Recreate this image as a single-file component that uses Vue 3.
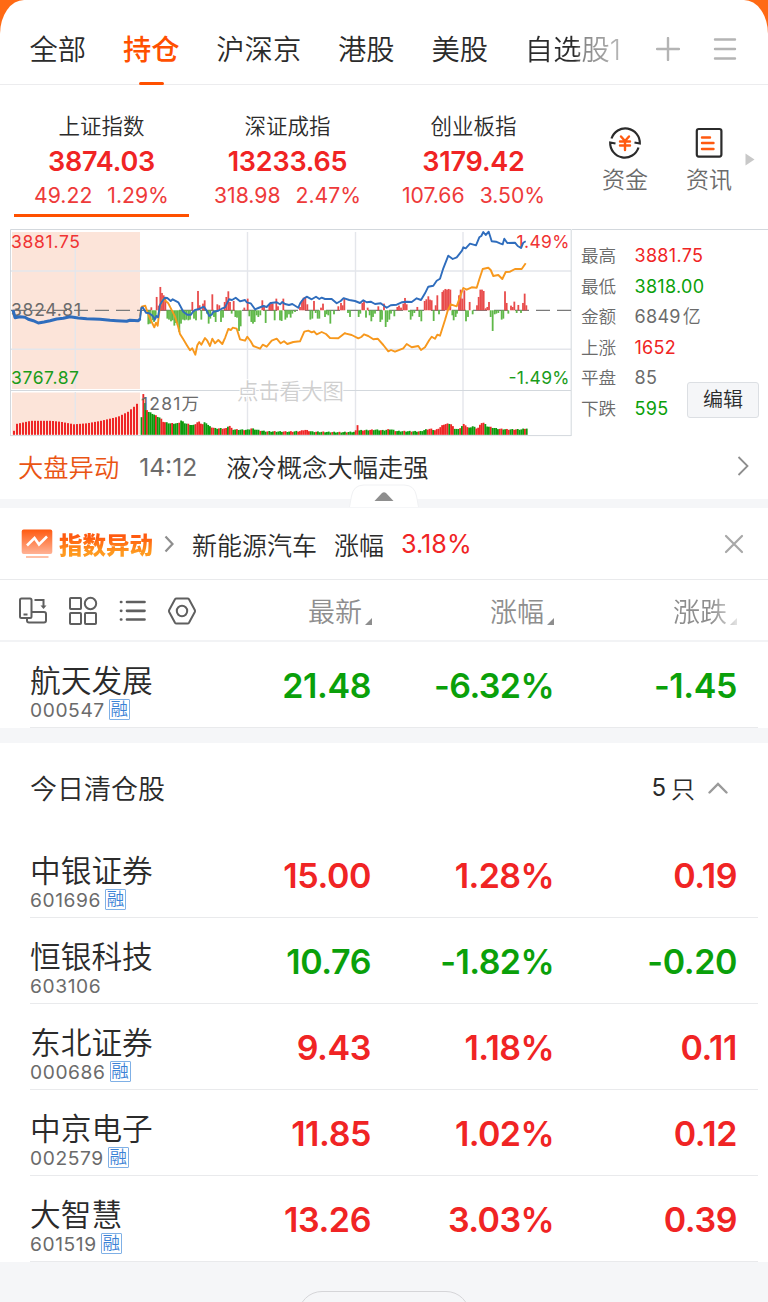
<template>
  <div class="page">
    <div class="sheet">
      <!-- Group Tabs -->
      <nav class="tabs">
        <div
          v-for="tab in tabs"
          :key="tab"
          :class="['tab', { active: tab === activeTab, fading: tab === '自选股1' }]"
          @click="activeTab = tab"
        >
          {{ tab }}
        </div>
        <svg class="tab-plus" width="24" height="24" viewBox="0 0 24 24">
          <path d="M1 12H23M12 1V23" />
        </svg>
        <svg class="tab-menu" width="24" height="24" viewBox="0 0 24 24">
          <path d="M2 2.5H22M2 12H22M2 21.5H22" />
        </svg>
      </nav>

      <!-- Market Indices -->
      <section class="indices">
        <div
          v-for="(item, i) in indices"
          :key="item.name"
          :class="['index-card', { selected: i === 0 }]"
        >
          <div class="index-name">{{ item.name }}</div>
          <div class="index-value">{{ item.value }}</div>
          <div class="index-change">
            <span>{{ item.change }}</span>
            <span>{{ item.percent }}</span>
          </div>
        </div>
        <div class="shortcut fund">
          <svg width="34" height="34" viewBox="0 0 34 34">
            <path class="dark" d="M3.5 12.5A14.5 14.5 0 0 1 31.8 17.5L26.5 16.5M30.5 21.5A14.5 14.5 0 0 1 2.2 16.5L7.5 17.5" />
            <path class="accent" d="M13 10.5L17 15L21 10.5M12 15.5H22M12 19.5H22M17 15V24" />
          </svg>
          <span>资金</span>
        </div>
        <div class="shortcut news">
          <svg width="34" height="34" viewBox="0 0 34 34">
            <rect class="dark" x="4.8" y="3" width="24.6" height="27.6" rx="2" />
            <path class="accent" d="M10 11.5H18M10 17H21.5M10 23H21.5" />
          </svg>
          <span>资讯</span>
        </div>
        <svg class="more-arrow" width="10" height="13" viewBox="0 0 10 13">
          <path d="M0.5 0.5L9.5 6.5L0.5 12.5Z" />
        </svg>
      </section>

      <!-- Intraday Chart -->
      <section class="market">
        <svg class="chart" width="572" height="208" viewBox="0 229 572 208">
          <rect x="12" y="232" width="128" height="157" class="preopen" />
          <rect x="12" y="392.5" width="128" height="42" class="preopen" />
          <path class="grid" d="M11 271H571M11 349.3H571M75.3 232V389M75.3 392V435M247.5 232V435M355.5 232V435M463 232V435" />
          <path class="frame" d="M10.5 436V229.5H571.2V436M10.5 390.5H571M10.5 435.6H571" />
          <path class="dash" d="M11 310.3H571" />
          <rect
            v-for="(bar, i) in momentum"
            :key="'m' + i"
            :x="bar.x"
            :y="bar.y"
            width="1.8"
            :height="bar.h"
            :class="bar.up ? 'bar-up' : 'bar-down'"
          />
          <rect
            v-for="(bar, i) in volume"
            :key="'v' + i"
            :x="bar.x"
            :y="434.8 - bar.h"
            :width="bar.w"
            :height="bar.h"
            :class="bar.up ? 'vol-up' : 'vol-down'"
          />
          <text x="237" y="398.5" class="watermark">点击看大图</text>
          <text x="11" y="248" class="label red" textLength="69">3881.75</text>
          <text x="11" y="316" class="label gray" textLength="70">3824.81</text>
          <text x="11" y="384" class="label green" textLength="68">3767.87</text>
          <text x="569.5" y="248" class="label red end" textLength="53">1.49%</text>
          <text x="569.5" y="384" class="label green end" textLength="61">-1.49%</text>
          <text x="141" y="410" class="label gray" textLength="58">1281万</text>
          <polyline class="line orange" :points="averageLine" />
          <polyline class="line blue thick" :points="preopenLine" />
          <polyline class="line blue" :points="priceLine" />
        </svg>
        <div class="stats">
          <div v-for="s in stats" :key="s.label" class="stat">
            <span class="stat-label">{{ s.label }}</span>
            <span :class="['stat-value', s.tone]">{{ s.value }}<em v-if="s.unit">{{ s.unit }}</em></span>
          </div>
          <button class="edit">编辑</button>
        </div>
      </section>

      <!-- Market Alert -->
      <section class="alert">
        <span class="alert-tag">大盘异动</span>
        <span class="alert-time">14:12</span>
        <span class="alert-text">液冷概念大幅走强</span>
        <svg class="alert-arrow" width="12" height="20" viewBox="0 0 12 20">
          <path d="M1.5 1L10.5 10L1.5 19" />
        </svg>
      </section>
      <div class="strip">
        <svg class="collapse" width="70" height="24" viewBox="0 0 70 24">
          <path class="collapse-bg" d="M0.5 23L2.5 12Q4.5 1 15 1H55Q65.5 1 67.5 12L69.5 23" />
          <path class="collapse-arrow" d="M25.5 17L33 9Q35 7.5 37 9L44.5 17Z" />
        </svg>
      </div>

      <!-- Index Alert -->
      <section class="notice">
        <svg class="notice-icon" width="32" height="30" viewBox="0 0 32 30">
          <defs>
            <linearGradient id="noticeFill" x1="0" y1="0" x2="0" y2="1">
              <stop offset="0" stop-color="#ff5a10" />
              <stop offset="1" stop-color="#ffb295" />
            </linearGradient>
          </defs>
          <rect x="0.7" y="0.5" width="30.6" height="24.5" rx="2" fill="url(#noticeFill)" />
          <path d="M6 16.5L13.5 9L18 15.5L26 7.5" class="notice-line" />
          <path d="M5 28H27.5" class="notice-base" />
        </svg>
        <span class="notice-title">指数异动</span>
        <svg class="notice-arrow" width="10" height="18" viewBox="0 0 10 18">
          <path d="M1.5 1.5L8.5 9L1.5 16.5" />
        </svg>
        <span class="notice-name">新能源汽车</span>
        <span class="notice-label">涨幅</span>
        <span class="notice-value">3.18%</span>
        <svg class="notice-close" width="20" height="20" viewBox="0 0 20 20">
          <path d="M2 2L18 18M18 2L2 18" />
        </svg>
      </section>

      <!-- Table Header -->
      <section class="row-grid table-head">
        <div class="tools">
          <svg width="30" height="30" viewBox="0 0 30 30">
            <rect x="2" y="2.5" width="11.5" height="19.5" rx="1.5" />
            <path d="M5.5 18.5H9.5M16.5 4H25.5V10.5M9 22V24.5Q9 26.5 11 26.5H26Q28 26.5 28 24.5V18Q28 16 26 16H13.5" />
            <path class="solid" d="M22.5 9.5H28.5L25.5 13Z" />
          </svg>
          <svg width="30" height="30" viewBox="0 0 30 30">
            <rect x="2" y="2" width="11" height="11" rx="0.8" />
            <circle cx="22.5" cy="7.5" r="5.7" />
            <rect x="2" y="17" width="11" height="11" rx="0.8" />
            <rect x="17" y="17" width="11" height="11" rx="0.8" />
          </svg>
          <svg width="30" height="30" viewBox="0 0 30 30">
            <path class="list-icon" d="M10 6H27.5M10 14.8H27.5M10 23.5H27.5M4 6H4.3M4 14.8H4.3M4 23.5H4.3" />
          </svg>
          <svg width="30" height="30" viewBox="0 0 30 30">
            <path d="M9.5 2.5H20.5Q21.5 2.5 22 3.3L27.8 14Q28.3 15 27.8 16L22 26.7Q21.5 27.5 20.5 27.5H9.5Q8.5 27.5 8 26.7L2.2 16Q1.7 15 2.2 14L8 3.3Q8.5 2.5 9.5 2.5Z" />
            <circle cx="15" cy="15" r="5.2" />
          </svg>
        </div>
        <div v-for="col in columns" :key="col" :class="['col-head', { faded: col === '涨跌' }]">
          <span>{{ col }}</span>
          <svg width="7" height="7" viewBox="0 0 7 7"><path d="M7 0V7H0Z" /></svg>
        </div>
      </section>

      <!-- Holdings -->
      <section class="list">
        <div v-for="stock in holdings" :key="stock.code" class="row-grid stock">
          <div class="stock-id">
            <div class="stock-name">{{ stock.name }}</div>
            <div class="stock-code">
              <span>{{ stock.code }}</span>
              <i v-if="stock.margin" class="badge">融</i>
            </div>
          </div>
          <div v-for="key in fields" :key="key" :class="['num', key, tone(stock)]">{{ stock[key] }}</div>
        </div>
      </section>
      <div class="divider"></div>

      <!-- Closed Today -->
      <section class="section-head">
        <span>今日清仓股</span>
        <div class="count">
          <span class="count-num">{{ closed.length }}</span>
          <span>只</span>
          <svg width="20" height="12" viewBox="0 0 20 12">
            <path d="M1.5 10.5L10 2L18.5 10.5" />
          </svg>
        </div>
      </section>
      <section class="list">
        <div v-for="stock in closed" :key="stock.code" class="row-grid stock">
          <div class="stock-id">
            <div class="stock-name">{{ stock.name }}</div>
            <div class="stock-code">
              <span>{{ stock.code }}</span>
              <i v-if="stock.margin" class="badge">融</i>
            </div>
          </div>
          <div v-for="key in fields" :key="key" :class="['num', key, tone(stock)]">{{ stock[key] }}</div>
        </div>
      </section>
    </div>
    <footer class="footer">
      <div class="footer-pill"></div>
    </footer>
  </div>
</template>

<script setup>
import { ref } from 'vue';

const tabs = ['全部', '持仓', '沪深京', '港股', '美股', '自选股1'];
const activeTab = ref('持仓');

const indices = [
  { name: '上证指数', value: '3874.03', change: '49.22', percent: '1.29%' },
  { name: '深证成指', value: '13233.65', change: '318.98', percent: '2.47%' },
  { name: '创业板指', value: '3179.42', change: '107.66', percent: '3.50%' }
];

const stats = [
  { label: '最高', value: '3881.75', tone: 'red' },
  { label: '最低', value: '3818.00', tone: 'green' },
  { label: '金额', value: '6849', unit: '亿', tone: 'gray' },
  { label: '上涨', value: '1652', tone: 'red' },
  { label: '平盘', value: '85', tone: 'gray' },
  { label: '下跌', value: '595', tone: 'green' }
];

const columns = ['最新', '涨幅', '涨跌'];
const fields = ['price', 'percent', 'change'];

const holdings = [
  { name: '航天发展', code: '000547', margin: true, price: '21.48', percent: '-6.32%', change: '-1.45' }
];

const closed = [
  { name: '中银证券', code: '601696', margin: true, price: '15.00', percent: '1.28%', change: '0.19' },
  { name: '恒银科技', code: '603106', margin: false, price: '10.76', percent: '-1.82%', change: '-0.20' },
  { name: '东北证券', code: '000686', margin: true, price: '9.43', percent: '1.18%', change: '0.11' },
  { name: '中京电子', code: '002579', margin: true, price: '11.85', percent: '1.02%', change: '0.12' },
  { name: '大智慧', code: '601519', margin: true, price: '13.26', percent: '3.03%', change: '0.39' }
];

function tone(stock) {
  return stock.change.startsWith('-') ? 'green' : 'red';
}

// Series are stored in thirds of a pixel, relative to the start of each session
const MORNING = 130;
const AFTERNOON = 340;

function toPoints(list, originX) {
  return list.map(([x, y]) => `${(originX + x / 3).toFixed(1)},${(220 + y / 3).toFixed(1)}`);
}

const preopenLine = toPoints([
  [39, 270], [45, 293], [60, 290], [75, 292], [85, 298], [100, 302], [115, 309], [132, 306], [150, 302], [170, 297],
  [190, 295], [210, 290], [235, 294], [260, 296], [300, 298], [330, 301], [350, 302], [380, 304], [390, 301],
  [415, 302], [421, 296]
], 0).join(' ');

const priceLine = [
  ...toPoints([
    [30, 298], [34, 264], [38, 262], [48, 278], [57, 280], [65, 285], [70, 290], [74, 300], [79, 288], [84, 292],
    [90, 255], [97, 243], [105, 233], [112, 234], [122, 243], [128, 238], [145, 247], [152, 260], [160, 275],
    [172, 284], [183, 284], [188, 276], [195, 270], [205, 268], [215, 263], [222, 260], [230, 272], [238, 288],
    [245, 284], [250, 275], [265, 272], [275, 266], [285, 262], [291, 250], [297, 238], [306, 240], [317, 233],
    [330, 244], [345, 240], [350, 247], [362, 250], [375, 268], [385, 264], [400, 258], [410, 261], [420, 250],
    [428, 248], [440, 247], [450, 253], [457, 246], [465, 252], [477, 255], [487, 252], [505, 263], [511, 249],
    [520, 237], [530, 230], [545, 238], [558, 230], [568, 237], [575, 233], [585, 237], [605, 237], [620, 250],
    [632, 243], [640, 235]
  ], MORNING),
  ...toPoints([
    [13, 235], [28, 240], [45, 243], [60, 249], [70, 241], [80, 247], [92, 245], [105, 252], [122, 250], [130, 256],
    [140, 263], [152, 256], [170, 254], [185, 247], [200, 245], [215, 246], [230, 235], [243, 240], [255, 220],
    [265, 200], [280, 197], [290, 182], [300, 176], [310, 145], [325, 107], [338, 117], [350, 112], [355, 106],
    [366, 92], [370, 82], [377, 85], [390, 71], [408, 76], [418, 52], [424, 48], [430, 36], [437, 45], [446, 35],
    [455, 64], [468, 65], [480, 70], [488, 73], [493, 56], [502, 69], [525, 68], [533, 78], [543, 84], [550, 68],
    [557, 64]
  ], AFTERNOON)
].join(' ');

const averageLine = [
  ...toPoints([
    [30, 290], [35, 260], [46, 257], [52, 275], [60, 295], [65, 306], [73, 322], [78, 308], [83, 317], [90, 258],
    [100, 237], [115, 250], [126, 272], [135, 290], [143, 315], [150, 342], [160, 358], [170, 375], [180, 391],
    [187, 385], [196, 404], [202, 376], [208, 366], [214, 374], [225, 354], [232, 362], [240, 378], [247, 356],
    [255, 370], [265, 360], [277, 372], [286, 352], [295, 327], [303, 330], [308, 323], [320, 326], [330, 358],
    [345, 362], [352, 350], [362, 364], [370, 378], [390, 386], [398, 374], [410, 380], [425, 362], [440, 356],
    [452, 370], [462, 364], [472, 372], [490, 366], [510, 364], [523, 335], [535, 332], [545, 337], [552, 334],
    [560, 343], [575, 336], [588, 342], [600, 354], [625, 355], [645, 339]
  ], MORNING),
  ...toPoints([
    [15, 340], [35, 345], [55, 355], [64, 351], [72, 343], [85, 348], [100, 358], [113, 356], [130, 375],
    [145, 394], [153, 390], [165, 395], [190, 385], [200, 372], [215, 382], [235, 378], [243, 390], [255, 382],
    [268, 360], [275, 350], [285, 356], [292, 344], [300, 347], [315, 300], [323, 272], [332, 253], [350, 259],
    [360, 230], [370, 204], [380, 209], [395, 202], [410, 203], [418, 178], [428, 147], [445, 143], [452, 150],
    [460, 168], [475, 165], [487, 177], [497, 156], [510, 155], [525, 147], [545, 147], [557, 130]
  ], AFTERNOON)
].join(' ');

function toBars(list, originX) {
  return list.map(([x, v]) => ({
    x: originX + x / 3 - 0.9,
    y: v > 0 ? 310.3 - v / 3 : 310.3,
    h: Math.abs(v) / 3,
    up: v > 0
  }));
}

const momentum = [
  ...toBars([
    [55, -42], [60, -40], [64, 9], [67, -30], [72, -35], [77, -25], [80, 40], [86, 14], [91, 70], [96, 52],
    [101, 45], [106, 36], [112, -25], [117, -28], [123, -33], [128, -30], [133, -46], [138, -38], [143, -45],
    [148, -65], [153, -40], [159, -28], [164, -30], [169, -28], [175, -30], [180, -28], [187, 25], [192, -25],
    [198, -30], [204, 58], [209, 15], [214, -28], [219, 20], [224, 30], [231, -10], [236, -40], [241, -25],
    [247, 48], [252, -20], [257, -35], [262, 18], [268, 15], [273, -35], [279, -22], [284, 25], [289, 40],
    [295, 57], [300, 25], [305, -10], [311, 28], [316, -20], [321, -22], [327, -62], [332, -48], [343, 8],
    [353, 35], [358, -18], [364, -35], [369, -40], [374, -35], [380, -15], [385, -20], [391, -15], [397, 30],
    [402, 15], [407, -38], [418, 18], [423, 25], [428, 20], [434, -30], [439, 35], [444, 12], [450, -30],
    [455, -32], [460, 35], [466, -28], [471, -22], [477, -12], [482, -22], [487, -10], [495, -5], [510, 10],
    [516, 30], [521, 38], [526, 40], [532, 18], [541, -28], [547, -25], [552, 28], [557, -8], [563, -25],
    [568, -25], [573, 8], [579, 20], [585, -20], [590, -12], [595, -15], [601, -40], [612, -12], [625, 12]
  ], MORNING),
  ...toBars([
    [3, 22], [8, 15], [13, 35], [24, -8], [30, -20], [56, -20], [61, -10], [67, 22], [72, 28], [78, -22], [83, 8],
    [89, -15], [94, -33], [99, -20], [105, -10], [115, 12], [121, -35], [126, -28], [132, 20], [137, -50],
    [142, -35], [148, -28], [153, -10], [163, -18], [172, 10], [177, 14], [183, 8], [190, 20], [195, 37],
    [200, 18], [207, -5], [212, -28], [217, -18], [223, -8], [232, 10], [238, -20], [244, -33], [254, 28],
    [259, 33], [265, 42], [270, 32], [275, 30], [281, -32], [287, 15], [292, 45], [297, -12], [307, 55],
    [311, 60], [316, 64], [321, 62], [326, 64], [331, 62], [337, -15], [341, -30], [347, -20], [351, -10],
    [357, 45], [362, 62], [367, 35], [373, 60], [378, -33], [384, -20], [389, 25], [398, -12], [411, 15],
    [416, 40], [421, 62], [426, 62], [431, 58], [437, 6], [442, 10], [447, 25], [452, -20], [458, -62],
    [464, -12], [469, -10], [475, -8], [485, -28], [490, -25], [495, 57], [500, 22], [505, -10], [513, 14],
    [518, 10], [523, 26], [530, -8], [535, 16], [543, -8], [549, 22], [554, 50], [559, 15]
  ], AFTERNOON)
];

// Envelope of the volume histogram: [x, height]
const preopenVolume = [
  [13, 4], [16, 11], [30, 14], [50, 14], [60, 13], [73, 10.5], [86, 11.5], [100, 14], [117, 18], [127, 23],
  [133, 28], [139, 34]
];
const sessionVolume = [
  [141, 16], [142.6, 42], [144.4, 32], [147, 23], [151.7, 21], [155, 19], [160, 16.5], [163, 12.5], [170, 11],
  [178, 11], [180.5, 14], [185, 11], [193, 9], [198, 13], [202, 10], [205, 12.5], [209, 8], [215, 6], [226, 6],
  [228.5, 9.5], [232, 5], [247, 4.5], [251, 6], [259, 4], [266, 3], [290, 2.8], [300, 3.3], [304, 4.7],
  [312, 2.7], [340, 2.2], [355, 2.6], [357, 10], [358.7, 4], [375, 4.7], [383, 4], [390, 5.3],
  [396, 3.3], [420, 3], [425, 4.7], [430, 5.7], [435, 4], [440, 7.3], [443, 10], [450, 11], [454, 6],
  [458, 5], [464, 10.7], [468, 6], [472, 8.3], [477, 5.7], [482, 12.7], [487, 8], [497, 5.7],
  [507, 5], [515, 5], [521, 5], [526, 6.3], [528, 3]
];

function heightAt(list, x) {
  const i = list.findIndex((p) => p[0] >= x);
  if (i <= 0) return list[0][1];
  const [x0, h0] = list[i - 1];
  const [x1, h1] = list[i];
  return h0 + ((h1 - h0) * (x - x0)) / (x1 - x0);
}

function isRising(x, i) {
  if (x < 143.5) return i === 1;
  if (x < 163) return i % 5 === 3 || x > 159;
  if (x >= 193 && x < 202) return true;
  if (x >= 217 && x < 231) return i % 4 !== 0;
  if (x >= 300 && x < 308) return true;
  if (x >= 426 && x < 452) return i % 9 !== 0;
  if (x >= 462 && x < 466) return true;
  if (x >= 477 && x < 484) return true;
  return (i * 7 + Math.floor(i / 4) * 3) % 10 < 3;
}

const volume = [];
for (let x = 13; x < 138.5; x += 3) {
  volume.push({ x, w: 2, h: heightAt(preopenVolume, x), up: true });
}
for (let i = 0; i < 215; i++) {
  const x = 140.6 + i * 1.8;
  volume.push({ x, w: 1.85, h: heightAt(sessionVolume, x + 0.5) + (i % 3) * 0.4, up: isRising(x, i) });
}
</script>

<style>
body {
  margin: 0;
  background: #f5f6f8;
}
</style>

<style scoped>
.page {
  width: 768px;
  height: 1302px;
  overflow: hidden;
  background: linear-gradient(#ff6a14 0 60px, #f5f6f8 60px);
  font-family: Inter, 'Noto Sans CJK SC', sans-serif;
  font-weight: 350;
  color: #2b2b2b;
}

.sheet {
  background: #fff;
  border-radius: 24px 24px 0 0 / 34px 34px 0 0;
}

.red {
  color: #f02424;
  fill: #f03333;
}

.green {
  color: #0aa00a;
  fill: #1a9c1a;
}

.gray {
  color: #6b6b6b;
  fill: #6b6b6b;
}

/* Tabs */
.tabs {
  display: flex;
  height: 84px;
  padding-left: 29.5px;
  gap: 36.8px;
  border-bottom: 1px solid #ececee;
  align-items: stretch;
}

.tab {
  position: relative;
  font-size: 28.3px;
  line-height: 101px;
  white-space: nowrap;
}

.tab.active {
  color: #ff5000;
  font-weight: 500;
}

.tab.active::after {
  content: '';
  position: absolute;
  left: 50%;
  bottom: -1px;
  width: 25px;
  height: 3.5px;
  margin-left: -12.5px;
  border-radius: 2px;
  background: #ff5000;
}

.tab.fading {
  width: 99px;
  color: transparent;
  background: linear-gradient(90deg, #2b2b2b 50%, #888 60%, #bbb 100%);
  background-clip: text;
  -webkit-background-clip: text;
}

.tab-plus,
.tab-menu {
  margin-top: 37px;
  fill: none;
  stroke: #b4b4b4;
  stroke-width: 2.4;
  stroke-linecap: round;
}

.tab-plus {
  margin-left: -5px;
}

.tab-menu {
  margin-left: -3.5px;
}

/* Indices */
.indices {
  display: flex;
  height: 144px;
}

.index-card {
  box-sizing: border-box;
  width: 175px;
  height: 132px;
  margin-left: 14px;
  margin-right: -3px;
  padding-top: 26px;
  text-align: center;
  border-bottom: 3px solid transparent;
}

.index-card.selected {
  border-bottom-color: #ff5000;
}

.index-name {
  font-size: 21.5px;
  line-height: 30px;
}

.index-value {
  margin-top: 4px;
  font-size: 27px;
  font-weight: 600;
  line-height: 34px;
  letter-spacing: -0.2px;
  color: #f02424;
}

.index-change {
  display: flex;
  justify-content: center;
  gap: 15px;
  margin-top: 2px;
  font-size: 21.2px;
  font-weight: 400;
  line-height: 28px;
  color: #ee3a3a;
}

.shortcut {
  display: flex;
  flex-direction: column;
  align-items: center;
  width: 50px;
  padding-top: 41px;
  font-size: 23px;
  line-height: 32px;
  color: #6b6b6b;
}

.shortcut span {
  margin-top: 4px;
}

.shortcut.fund {
  margin-left: 42px;
}

.shortcut.news {
  margin-left: 34px;
}

.dark {
  fill: none;
  stroke: #2b2b2b;
  stroke-width: 2.2;
}

.accent {
  fill: none;
  stroke: #ff5a10;
  stroke-width: 2.4;
  stroke-linecap: round;
}

.more-arrow {
  margin: 68px 0 0 11px;
  fill: #c8c8c8;
}

/* Chart */
.market {
  display: flex;
  height: 207px;
}

.chart {
  flex-shrink: 0;
}

.preopen {
  fill: #fce4d9;
}

.grid {
  fill: none;
  stroke: #e4e6eb;
  stroke-width: 1.4;
}

.frame {
  fill: none;
  stroke: #d3d8dd;
  stroke-width: 1;
}

.dash {
  stroke: #7a7a7a;
  stroke-width: 1.2;
  stroke-dasharray: 14 7;
}

.bar-up {
  fill: #e84b4b;
}

.bar-down {
  fill: #5fb848;
}

.vol-up {
  fill: #ee2626;
}

.vol-down {
  fill: #0c9a0c;
}

.line {
  fill: none;
  stroke-width: 1.9;
  stroke-linejoin: round;
}

.line.blue {
  stroke: #2f6dbd;
}

.line.orange {
  stroke: #f7981d;
}

.line.thick {
  stroke-width: 3;
}

.label {
  font-size: 17.5px;
  font-weight: 400;
}

.label.end {
  text-anchor: end;
}

.watermark {
  font-size: 21.4px;
  fill: #cfcfcf;
  stroke: #fff;
  stroke-width: 2px;
  paint-order: stroke;
}

/* Stats */
.stats {
  position: relative;
  box-sizing: border-box;
  flex: 1;
  padding: 11px 0 0 9px;
  border-top: 1px solid #d3d8dd;
}

.stat {
  display: flex;
  height: 30.5px;
  line-height: 30.5px;
  font-size: 17.6px;
}

.stat-label {
  width: 53.5px;
  color: #6b6b6b;
}

.stat-value {
  font-size: 18px;
  font-weight: 400;
  letter-spacing: 0.3px;
}

.stat-value em {
  margin-left: 2px;
  font-style: normal;
  font-weight: 350;
}

.edit {
  position: absolute;
  left: 115px;
  top: 152px;
  width: 72px;
  height: 36px;
  padding: 0;
  border: 1px solid #dcdfe3;
  border-radius: 3px;
  background: #f5f6f8;
  color: #2b2b2b;
  font: 350 20px/34px Inter, 'Noto Sans CJK SC', sans-serif;
}

/* Market Alert */
.alert {
  display: flex;
  align-items: center;
  height: 60px;
  padding: 0 19px 3px 18px;
  font-size: 25.3px;
}

.alert-tag {
  color: #ea5413;
}

.alert-time {
  width: 67px;
  margin-left: 20px;
  padding-top: 1px;
  font-size: 24.6px;
  font-weight: 400;
  color: #6b6b6b;
}

.alert-text {
  margin-left: 20px;
}

.alert-arrow {
  margin-left: auto;
  fill: none;
  stroke: #8e8e8e;
  stroke-width: 1.8;
}

.strip {
  position: relative;
  height: 9px;
  background: #f5f6f8;
}

.collapse {
  position: absolute;
  left: 349px;
  bottom: 0;
}

.collapse-bg {
  fill: #fff;
  stroke: #f0f1f3;
}

.collapse-arrow {
  fill: #8e8e8e;
}

/* Index Alert */
.notice {
  display: flex;
  align-items: center;
  height: 71px;
  padding: 0 24px 0 21px;
  border-bottom: 1px solid #e9eaec;
  font-size: 25px;
}

.notice-line {
  fill: none;
  stroke: #fff;
  stroke-width: 2.6;
}

.notice-base {
  stroke: #ffc0a6;
  stroke-width: 2;
}

.notice-title {
  margin-left: 6px;
  font-size: 23.5px;
  font-weight: 900;
  color: transparent;
  background: linear-gradient(#ff5a10 30%, #ff9a1f 75%);
  background-clip: text;
  -webkit-background-clip: text;
}

.notice-arrow {
  margin-left: 11px;
  fill: none;
  stroke: #8e8e8e;
  stroke-width: 2.2;
}

.notice-name {
  margin-left: 18px;
}

.notice-label {
  margin-left: 17px;
}

.notice-value {
  margin-left: 17px;
  font-size: 25.2px;
  font-weight: 400;
  color: #f02424;
}

.notice-close {
  margin-left: auto;
  fill: none;
  stroke: #a8a8a8;
  stroke-width: 2.2;
  stroke-linecap: round;
}

/* Table */
.row-grid {
  display: grid;
  grid-template-columns: 159px 182px 182px 184px;
  padding-left: 30px;
  align-items: center;
}

.table-head {
  height: 60px;
  border-bottom: 2px solid #f2f3f5;
}

.tools {
  display: flex;
  gap: 19.5px;
  margin: 2px -30px 0 -12px;
  fill: none;
  stroke: #5f5f5f;
  stroke-width: 2;
}

.tools svg {
  flex-shrink: 0;
}

.tools .solid {
  fill: #5f5f5f;
  stroke: none;
}

.tools .list-icon {
  stroke-width: 2.7;
  stroke-linecap: round;
}

.col-head {
  display: flex;
  justify-content: flex-end;
  align-items: flex-end;
  gap: 3px;
  margin: 5px -1px 0 0;
  font-size: 27px;
  line-height: 40px;
  color: #8e8e8e;
}

.col-head svg {
  margin-bottom: 8px;
  fill: #8e8e8e;
}

.col-head.faded {
  margin-right: 0;
  mask-image: linear-gradient(90deg, #000 86%, rgba(0, 0, 0, 0.25) 100%);
}

.stock {
  position: relative;
  height: 86px;
}

.stock::after {
  content: '';
  position: absolute;
  left: 30px;
  right: 10px;
  bottom: 0;
  height: 1px;
  background: #e9eaec;
}

.stock-id {
  padding-top: 11px;
  white-space: nowrap;
}

.stock-name {
  font-size: 30.7px;
  line-height: 38px;
}

.stock-code {
  display: flex;
  align-items: center;
  gap: 4px;
  height: 20px;
  font-size: 19.2px;
  font-weight: 400;
  line-height: 20px;
  letter-spacing: 0.6px;
  color: #6b6b6b;
}

.badge {
  box-sizing: border-box;
  width: 21px;
  height: 21px;
  border: 1px solid #7fb0e6;
  border-radius: 1px;
  font-size: 17.5px;
  font-style: normal;
  font-weight: 350;
  line-height: 18px;
  letter-spacing: 0;
  text-align: center;
  color: #3b82d6;
}

.num {
  text-align: right;
  font-size: 34px;
  font-weight: 600;
  letter-spacing: -0.4px;
}

.num.percent {
  margin-right: -1px;
  letter-spacing: -0.6px;
}

.divider {
  height: 15px;
  background: #f5f6f8;
}

.section-head {
  display: flex;
  justify-content: space-between;
  align-items: center;
  height: 89px;
  padding: 0 40px 0 30px;
  font-size: 27px;
}

.count {
  display: flex;
  align-items: center;
  gap: 5px;
  font-size: 24px;
}

.count-num {
  font-weight: 400;
}

.count svg {
  margin-left: 8px;
  fill: none;
  stroke: #9a9a9a;
  stroke-width: 2.4;
  stroke-linecap: round;
}

.footer {
  height: 41px;
  background: #f5f6f8;
  overflow: hidden;
}

.footer-pill {
  box-sizing: border-box;
  width: 172px;
  height: 60px;
  margin: 29px auto 0;
  border: 1px solid #d5d5d8;
  border-radius: 24px;
}
</style>
